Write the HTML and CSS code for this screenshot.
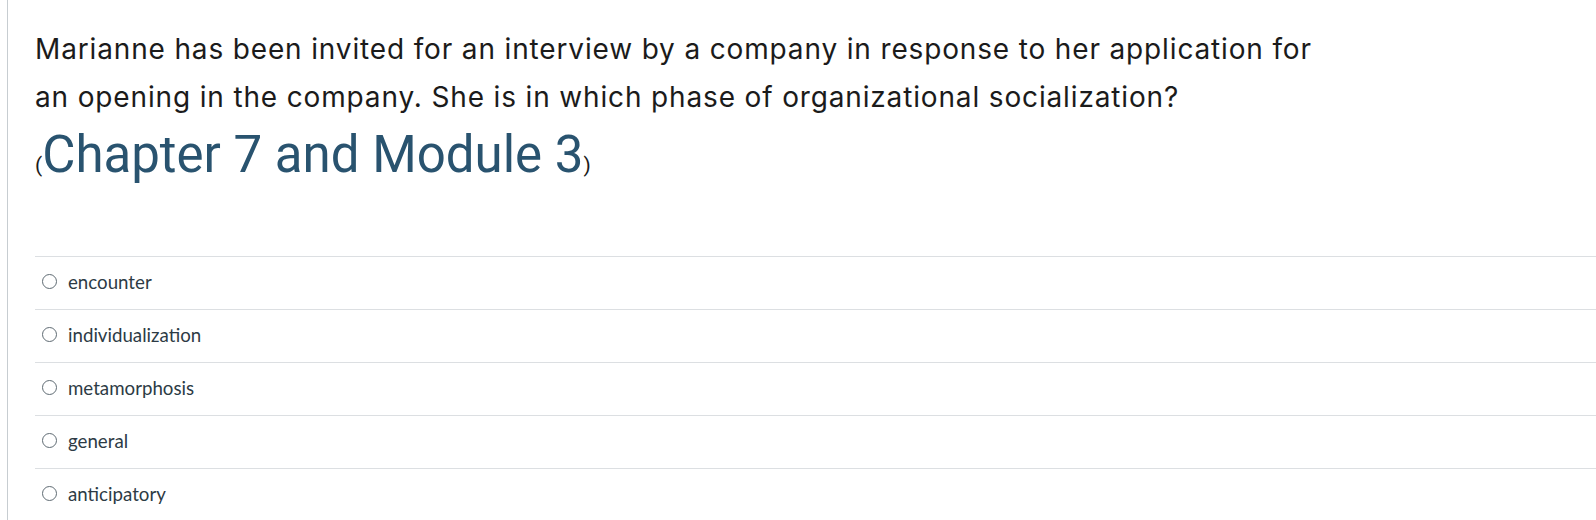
FILE: index.html
```html
<!DOCTYPE html>
<html>
<head>
<meta charset="utf-8">
<link rel="stylesheet" href="styles.css">
</head>
<body>
<div class="frame">
  <div class="question">
    <p class="prompt">Marianne has been invited for an interview by a company in response to her application for an opening in the company. She is in which phase of organizational socialization?</p>
    <p class="ref"><span class="paren">(</span>Chapter 7 and Module 3<span class="paren">)</span></p>
    <ul class="answers">
      <li class="answer"><span class="radio"></span><span class="label">encounter</span></li>
      <li class="answer"><span class="radio"></span><span class="label">individualization</span></li>
      <li class="answer"><span class="radio"></span><span class="label">metamorphosis</span></li>
      <li class="answer"><span class="radio"></span><span class="label">general</span></li>
      <li class="answer"><span class="radio"></span><span class="label">anticipatory</span></li>
    </ul>
  </div>
</div>
</body>
</html>
```
FILE: styles.css
```css
html, body {
  margin: 0;
  padding: 0;
  background: #fff;
}
.frame {
  margin-left: 7px;
  border-left: 1px solid #c7cdd1;
  min-height: 520px;
  padding: 25px 0 0 27px;
  box-sizing: border-box;
}
.prompt {
  margin: 0;
  font-family: Inter, "Open Sans", sans-serif;
  font-size: 28px;
  letter-spacing: 0.85px;
  line-height: 48px;
  color: #1b1b1b;
  max-width: 1300px;
}
.ref {
  margin: 0;
  padding-top: 2px;
  font-family: Roboto, "Liberation Sans", sans-serif;
  font-size: 51px;
  line-height: 64px;
  color: #29536f;
}
.paren {
  font-size: 21px;
  color: #1b1b1b;
}
.answers {
  list-style: none;
  margin: 59px 0 0 0;
  padding: 0;
  border-top: 1px solid #dcdfe2;
}
.answer {
  display: flex;
  align-items: center;
  height: 53px;
  padding-bottom: 3px;
  box-sizing: border-box;
  border-bottom: 1px solid #dcdfe2;
  font-family: Lato, sans-serif;
  font-size: 18.7px;
  color: #2d3b45;
}
.radio {
  width: 15px;
  height: 15px;
  border: 1px solid #5f6b73;
  border-radius: 50%;
  margin: 0 11px 0 7px;
  box-sizing: border-box;
}
```
